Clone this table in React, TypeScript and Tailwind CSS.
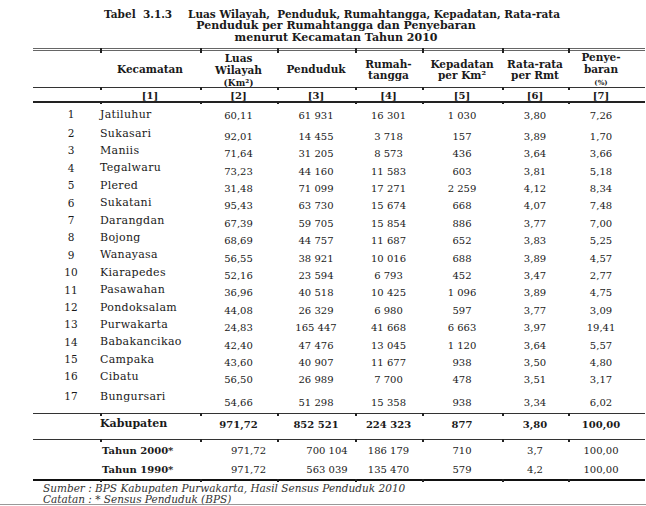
const cols = "grid grid-cols-[67px_100px_77px_78px_67px_80px_66px_66px_11px]";

// [no, kecamatan, luas, penduduk, rumahtangga, kepadatan, rata-rata, penyebaran]
const rows: string[][] = [
  ["1", "Jatiluhur", "60,11", "61 931", "16 301", "1 030", "3,80", "7,26"],
  ["2", "Sukasari", "92,01", "14 455", "3 718", "157", "3,89", "1,70"],
  ["3", "Maniis", "71,64", "31 205", "8 573", "436", "3,64", "3,66"],
  ["4", "Tegalwaru", "73,23", "44 160", "11 583", "603", "3,81", "5,18"],
  ["5", "Plered", "31,48", "71 099", "17 271", "2 259", "4,12", "8,34"],
  ["6", "Sukatani", "95,43", "63 730", "15 674", "668", "4,07", "7,48"],
  ["7", "Darangdan", "67,39", "59 705", "15 854", "886", "3,77", "7,00"],
  ["8", "Bojong", "68,69", "44 757", "11 687", "652", "3,83", "5,25"],
  ["9", "Wanayasa", "56,55", "38 921", "10 016", "688", "3,89", "4,57"],
  ["10", "Kiarapedes", "52,16", "23 594", "6 793", "452", "3,47", "2,77"],
  ["11", "Pasawahan", "36,96", "40 518", "10 425", "1 096", "3,89", "4,75"],
  ["12", "Pondoksalam", "44,08", "26 329", "6 980", "597", "3,77", "3,09"],
  ["13", "Purwakarta", "24,83", "165 447", "41 668", "6 663", "3,97", "19,41"],
  ["14", "Babakancikao", "42,40", "47 476", "13 045", "1 120", "3,64", "5,57"],
  ["15", "Campaka", "43,60", "40 907", "11 677", "938", "3,50", "4,80"],
  ["16", "Cibatu", "56,50", "26 989", "7 700", "478", "3,51", "3,17"],
  ["17", "Bungursari", "54,66", "51 298", "15 358", "938", "3,34", "6,02"],
];

const past = [
  ["Tahun 2000*", "971,72", "700 104", "186 179", "710", "3,7", "100,00"],
  ["Tahun 1990*", "971,72", "563 039", "135 470", "579", "4,2", "100,00"],
];

// horizontal rule with small tick marks at the column boundaries
function Rule({ line }: { line: string }) {
  return (
    <div className={`${cols} ${line}`}>
      {Array.from({ length: 9 }).map((_, i) => (
        <div key={i} className="flex items-center h-full">
          {i > 0 && i < 8 ? <span className="shrink-0 w-[2px] h-[3px] bg-[#222]" /> : null}
        </div>
      ))}
    </div>
  );
}

export default function App() {
  return (
    <div className="w-[646px] h-[506px] overflow-hidden bg-white text-[#1a1a1a] font-['DejaVu_Serif',serif]">
      {/* Title */}
      <div className="pt-[8px] font-bold text-[11px] leading-[12px]">
        <div className="flex text-[10.5px]">
          <span className="pl-[104px] w-[188px]">Tabel&nbsp; 3.1.3</span>
          <span>Luas Wilayah,&nbsp; Penduduk, Rumahtangga, Kepadatan, Rata-rata</span>
        </div>
        <div className="pl-[26px] text-center">Penduduk per Rumahtangga dan Penyebaran</div>
        <div className="pl-[26px] text-center">menurut Kecamatan Tahun 2010</div>
      </div>

      <div className="ml-[33px] w-[612px] mt-[4px]">
        {/* Header */}
        <Rule line="h-px bg-[#666]" />
        <div className="h-px" />
        <Rule line="h-px bg-[#666]" />
        <div className={`${cols} h-[36px] items-center text-center font-bold text-[10.5px]`}>
          <div />
          <div>Kecamatan</div>
          <div className="leading-[12px]">
            Luas
            <br />
            Wilayah
            <br />
            <span className="text-[9px]">(Km²)</span>
          </div>
          <div>Penduduk</div>
          <div className="leading-[11px]">
            Rumah-
            <br />
            tangga
          </div>
          <div className="leading-[11px]">
            Kepadatan
            <br />
            per Km²
          </div>
          <div className="leading-[11px]">
            Rata-rata
            <br />
            per Rmt
          </div>
          <div className="leading-[12px]">
            Penye-
            <br />
            baran
            <br />
            <span className="text-[7px]">(%)</span>
          </div>
          <div />
        </div>
        <Rule line="h-px bg-[#333]" />
        <div className={`${cols} h-[13px] items-center text-center font-bold text-[10px]`}>
          <div />
          {["[1]", "[2]", "[3]", "[4]", "[5]", "[6]", "[7]"].map((t) => (
            <div key={t}>{t}</div>
          ))}
          <div />
        </div>
        <Rule line="h-[1.5px] bg-[#222]" />

        {/* Body */}
        <div className="pt-[4px] pb-[9px]">
          {rows.map((r, i) => {
            const shift = i === 0 ? "" : i === 16 ? "pt-[10px]" : "pt-[5px]";
            return (
              <div key={r[0]} className={`${cols} ${i === 16 ? "h-[19px]" : "h-[17.4px]"} items-center`}>
                <div className="pl-[9px] text-center text-[10.5px]">{r[0]}</div>
                <div className="text-[11px] tracking-[0.3px]">{r[1]}</div>
                {r.slice(2).map((v, j) => (
                  <div key={j} className={`text-center text-[10px] ${shift}`}>
                    {v}
                  </div>
                ))}
                <div />
              </div>
            );
          })}
        </div>

        <Rule line="h-px bg-[#333]" />
        <div className={`${cols} h-[25px] items-center pb-[4px] font-bold text-[10px]`}>
          <div />
          <div className="text-[11px]">Kabupaten</div>
          <div className="text-center">971,72</div>
          <div className="text-center">852 521</div>
          <div className="text-center">224 323</div>
          <div className="text-center">877</div>
          <div className="text-center">3,80</div>
          <div className="text-center">100,00</div>
          <div />
        </div>
        <Rule line="h-px bg-[#333]" />

        <div className="pt-[1px]">
          {past.map((p) => (
            <div key={p[0]} className={`${cols} h-[19px] items-center text-[10px]`}>
              <div />
              <div className="font-bold pl-[2px]">{p[0]}</div>
              <div className="text-center pl-[20px]">{p[1]}</div>
              <div className="text-center pl-[22px]">{p[2]}</div>
              <div className="text-center">{p[3]}</div>
              <div className="text-center">{p[4]}</div>
              <div className="text-center">{p[5]}</div>
              <div className="text-center">{p[6]}</div>
              <div />
            </div>
          ))}
        </div>
        <Rule line="h-[2px] bg-[#111]" />
      </div>

      {/* Notes */}
      <div className="pt-[2px] pl-[43px] italic text-[10.5px] text-[#333]">
        <div className="leading-[11px]">Sumber : BPS Kabupaten Purwakarta, Hasil Sensus Penduduk 2010</div>
        <div className="leading-[10px]">Catatan : * Sensus Penduduk (BPS)</div>
      </div>
      <div className="h-px bg-[#999]" />
    </div>
  );
}
